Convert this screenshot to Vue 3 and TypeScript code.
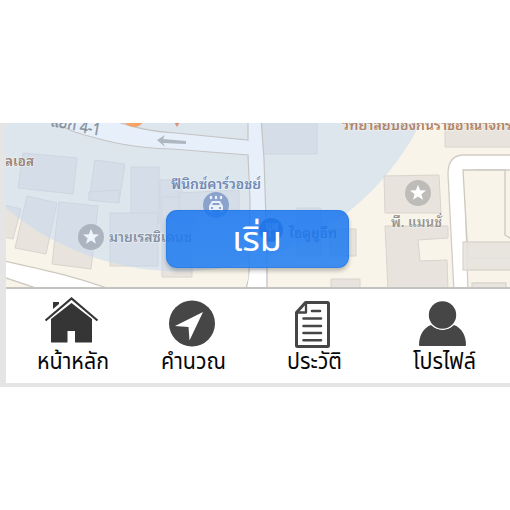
<script setup lang="ts">
interface NavItem {
  id: string
  label: string
  width: number
  x: number
}

const items: NavItem[] = [
  { id: 'home', label: 'หน้าหลัก', width: 72, x: 31 },
  { id: 'navigate', label: 'คำนวณ', width: 65, x: 29 },
  { id: 'history', label: 'ประวัติ', width: 55, x: 29 },
  { id: 'profile', label: 'โปรไฟล์', width: 63, x: 29 },
]

const star = 'M0-8.2 2.1-2.7 8-2.5 3.4 1.2 5 6.8 0 3.6-5 6.8-3.4 1.2-8-2.5-2.1-2.7Z'
</script>

<template>
  <div class="page">
    <main class="screen">
      <section class="map-area">
        <svg class="map" viewBox="6 123 504 164" preserveAspectRatio="none">
          <rect x="6" y="123" width="504" height="164" fill="#f8f4e9" />
          <g fill="#e8e4dd" stroke="#d8d4ce" stroke-width="1">
            <path d="M23 153 77 158 73 194 18 188Z" />
            <path d="M95 160 125 164 119 202 89 200Z" />
            <path d="M131 167H159V223H131Z" />
            <path d="M160 180H182V232H160Z" />
            <path d="M27 196 57 203 46 254 15 248Z" />
            <path d="M0 204 21 209 13 239 0 236Z" />
            <path d="M59 202 98 206 91 269 52 264Z" />
            <path d="M89 192 119 190V203L98 201 89 200Z" />
            <path d="M110 213H158V266H110Z" />
            <path d="M162 197H192V277H162Z" />
            <path d="M262 110H317V154H262Z" />
            <path d="M179 193 239 190V210H179Z" />
            <path d="M297 208H321V256H297Z" />
            <path d="M330 229H356V256H330Z" />
            <path d="M331 279H360V290H331Z" />
            <path d="M445 120H516V147H445Z" />
            <path d="M384 176 439 175 441 213H385Z" />
            <path d="M385 226H448V238L418 240 420 261 447 260 448 290H388Z" />
          </g>
          <circle cx="179.4" cy="1.4" r="270" fill="#c3d9f2" fill-opacity=".52" />
          <path d="M42 118 75 132C110 143 135 148 172 149L248 155 250 200 249 278 245 292H267V250L264 159 261 118H248V140L176 133C141 131 130 125 104 118Z" fill="#e7f0fa" stroke="#c5c4c5" stroke-width="1.2" />
          <path d="M250 270H266L266 290H247Z" fill="#fff" />
          <g stroke="#cdc8c0" stroke-width="1.3">
            <path d="M0 260C45 270 75 276 112 290H42L0 276Z" fill="#fff" />
            <path d="M516 155H464Q448 155 448 174L454 292H468L465 187Q465 170 478 170H516" fill="#fff" stroke="#d1cdc6" />
            <path d="M463 170H505V235L515 241V258H468Z" fill="#f8f4e9" />
            <path d="M463 242H516V270H463Z" fill="#e6e3de" fill-opacity=".9" stroke="#dad6d0" />
            <path d="M472 283H506V291H472Z" fill="#e9e5de" stroke="#dad6d0" />
          </g>
          <path d="m157 140 8-5-2 4 23 2v3l-23-1 2 4Z" fill="#aeb6c0" />
          <circle cx="134" cy="116" r="11" fill="#f5a368" />
          <path d="m174 120 3 5 3-5" fill="none" stroke="#dd8f79" stroke-width="2" />
          <g class="road">
            <text x="50" y="126" textLength="26" lengthAdjust="spacingAndGlyphs" transform="rotate(9 50 126)">แยก</text>
            <text x="79" y="132" textLength="21" lengthAdjust="spacingAndGlyphs" transform="rotate(10 79 132)">4-1</text>
          </g>
          <g class="place">
            <text x="5" y="166" textLength="29" lengthAdjust="spacingAndGlyphs" fill="#9b8276">ลเอส</text>
            <text x="342" y="130" textLength="170" lengthAdjust="spacingAndGlyphs" fill="#b28468">วิทยาลัยป้องกันราชอาณาจักร</text>
            <text x="171" y="189" textLength="90" lengthAdjust="spacingAndGlyphs" fill="#6f89b5">ฟีนิกซ์คาร์วอชย์</text>
            <text x="109" y="242" textLength="83" lengthAdjust="spacingAndGlyphs" fill="#8490a3">มายเรสซิเดนซ</text>
            <text x="289" y="238" textLength="48" lengthAdjust="spacingAndGlyphs" fill="#63789c">ไอดูยูอีท</text>
            <text x="391" y="227" textLength="51" lengthAdjust="spacingAndGlyphs" fill="#98958f">พี. แมนชั่</text>
          </g>
          <g transform="translate(91 237)">
            <circle r="13" fill="#acb5bf" /><path :d="star" fill="#eef4fb" />
          </g>
          <g transform="translate(418 193)">
            <circle r="13" fill="#bebcb9" /><path :d="star" fill="#fff" />
          </g>
          <g transform="translate(216 205)">
            <circle r="13" fill="#8ba3cc" />
            <path d="M-5-8v1M0-8v1M5-8v1" stroke="#e8f0fb" stroke-width="2.400" stroke-linecap="round" />
            <path fill-rule="evenodd" d="M-7 1-4-4H4L7 1V7H4V5H-4V7H-7ZM-4 0H4L3-2H-3ZM-5 2v2h2V2ZM3 2v2h2V2Z" fill="#e8f0fb" />
          </g>
          <g transform="translate(271 230)">
            <circle r="12" fill="#4f71a8" />
            <path d="M-4-7v5M-1-7v5M2-7v5M-4-2q3 3 6 0M-1 0v7M6-7v14M6-7q-3 3-2 7" fill="none" stroke="#b9cbe8" stroke-width="1.5" />
          </g>
        </svg>
        <button class="start" type="button">
          <svg class="start-label" viewBox="0 0 183 58">
            <text x="66" y="41" textLength="50" lengthAdjust="spacingAndGlyphs">เริ่ม</text>
          </svg>
        </button>
      </section>
      <nav class="tabs">
        <a v-for="item in items" :key="item.id" class="tab">
          <svg class="tab-art" viewBox="0 0 126 94">
            <g v-if="item.id === 'home'" transform="translate(0 -289)">
              <path d="M47 308.500V302H53V304L47 309ZM65.500 303 86 319V342.500H69V331H61.500V342.500H45V319Z" fill="#353535" />
              <path d="M39.500 320.500 65.500 298.500 91.500 320.500" fill="none" stroke="#353535" stroke-width="2.200" />
            </g>
            <g v-else-if="item.id === 'navigate'">
              <circle cx="60" cy="34.500" r="23" fill="#464646" />
              <path d="M71 23 57.500 51.500 56.500 38 43 37Z" fill="#fff" />
            </g>
            <g v-else-if="item.id === 'history'" transform="translate(-5.500 -0.500)" fill="none" stroke="#464646" stroke-linecap="round" stroke-linejoin="round">
              <path d="M53 14H75Q76 14 76 15V57Q76 58 75 58H45Q44 58 44 57V24Z" stroke-width="3" />
              <path d="M53.500 15V24H45" stroke-width="2.300" />
              <path d="M59.500 22.500H67.500M51 30H68.500M51 37.500H68.500M51 44.500H68.500M51 51.800H68.500" stroke-width="2.600" />
            </g>
            <g v-else transform="translate(-6 -1)" fill="#464646">
              <path d="M41 57C41 48 45 40 53 37Q64.500 46 76 37C84 40 88 48 88 57Q88 58 87 58H42Q41 58 41 57Z" />
              <circle cx="64.500" cy="27" r="15" fill="#fff" />
              <circle cx="64.500" cy="27" r="13.700" />
            </g>
            <text class="tab-label" :x="item.x" y="80" :textLength="item.width" lengthAdjust="spacingAndGlyphs">{{ item.label }}</text>
          </svg>
        </a>
      </nav>
    </main>
  </div>
</template>

<style scoped>
.page {
  width: 510px;
  height: 510px;
  padding-top: 123px;
  box-sizing: border-box;
  background: #fff;
  overflow: hidden;
}
.screen {
  display: flex;
  flex-direction: column;
  height: 264px;
  box-sizing: border-box;
  padding: 0 0 4px 6px;
  background: #e5e5e5;
}
.map-area {
  display: grid;
  height: 164px;
}
.map {
  grid-area: 1 / 1;
  display: block;
  width: 504px;
  height: 164px;
}
.road {
  font: 17px "Noto Sans", "Noto Sans Thai", sans-serif;
  fill: #858f9a;
  stroke: #858f9a;
  stroke-width: 0.3;
}
.place {
  font: 600 13px "Noto Sans Thai Looped", "Loma", "Noto Sans Thai", sans-serif;
  paint-order: stroke;
  stroke: #ffffff66;
  stroke-width: 1.5px;
}
.start {
  grid-area: 1 / 1;
  z-index: 1;
  width: 183px;
  height: 58px;
  margin: 87px 0 0 160px;
  padding: 0;
  border: 0;
  border-radius: 11px;
  background: linear-gradient(#1a76f0dc, #207df0dc);
  box-shadow: 0 3px 4px #0000003d, inset 0 0 0 1px #1b70dc66;
}
.start-label {
  display: block;
  width: 183px;
  height: 58px;
  overflow: visible;
  fill: #fff;
  font: 34px "Noto Sans Thai", "Noto Sans", sans-serif;
}
.tabs {
  display: grid;
  grid-template-columns: repeat(4, 126px);
  height: 96px;
  box-sizing: border-box;
  border-top: 2px solid #c3c3c0;
  background: #fff;
}
.tab-art {
  display: block;
  width: 126px;
  height: 94px;
}
.tab-label {
  fill: #080808;
  font: 23px "Noto Sans Thai", "Noto Sans", sans-serif;
}
</style>
